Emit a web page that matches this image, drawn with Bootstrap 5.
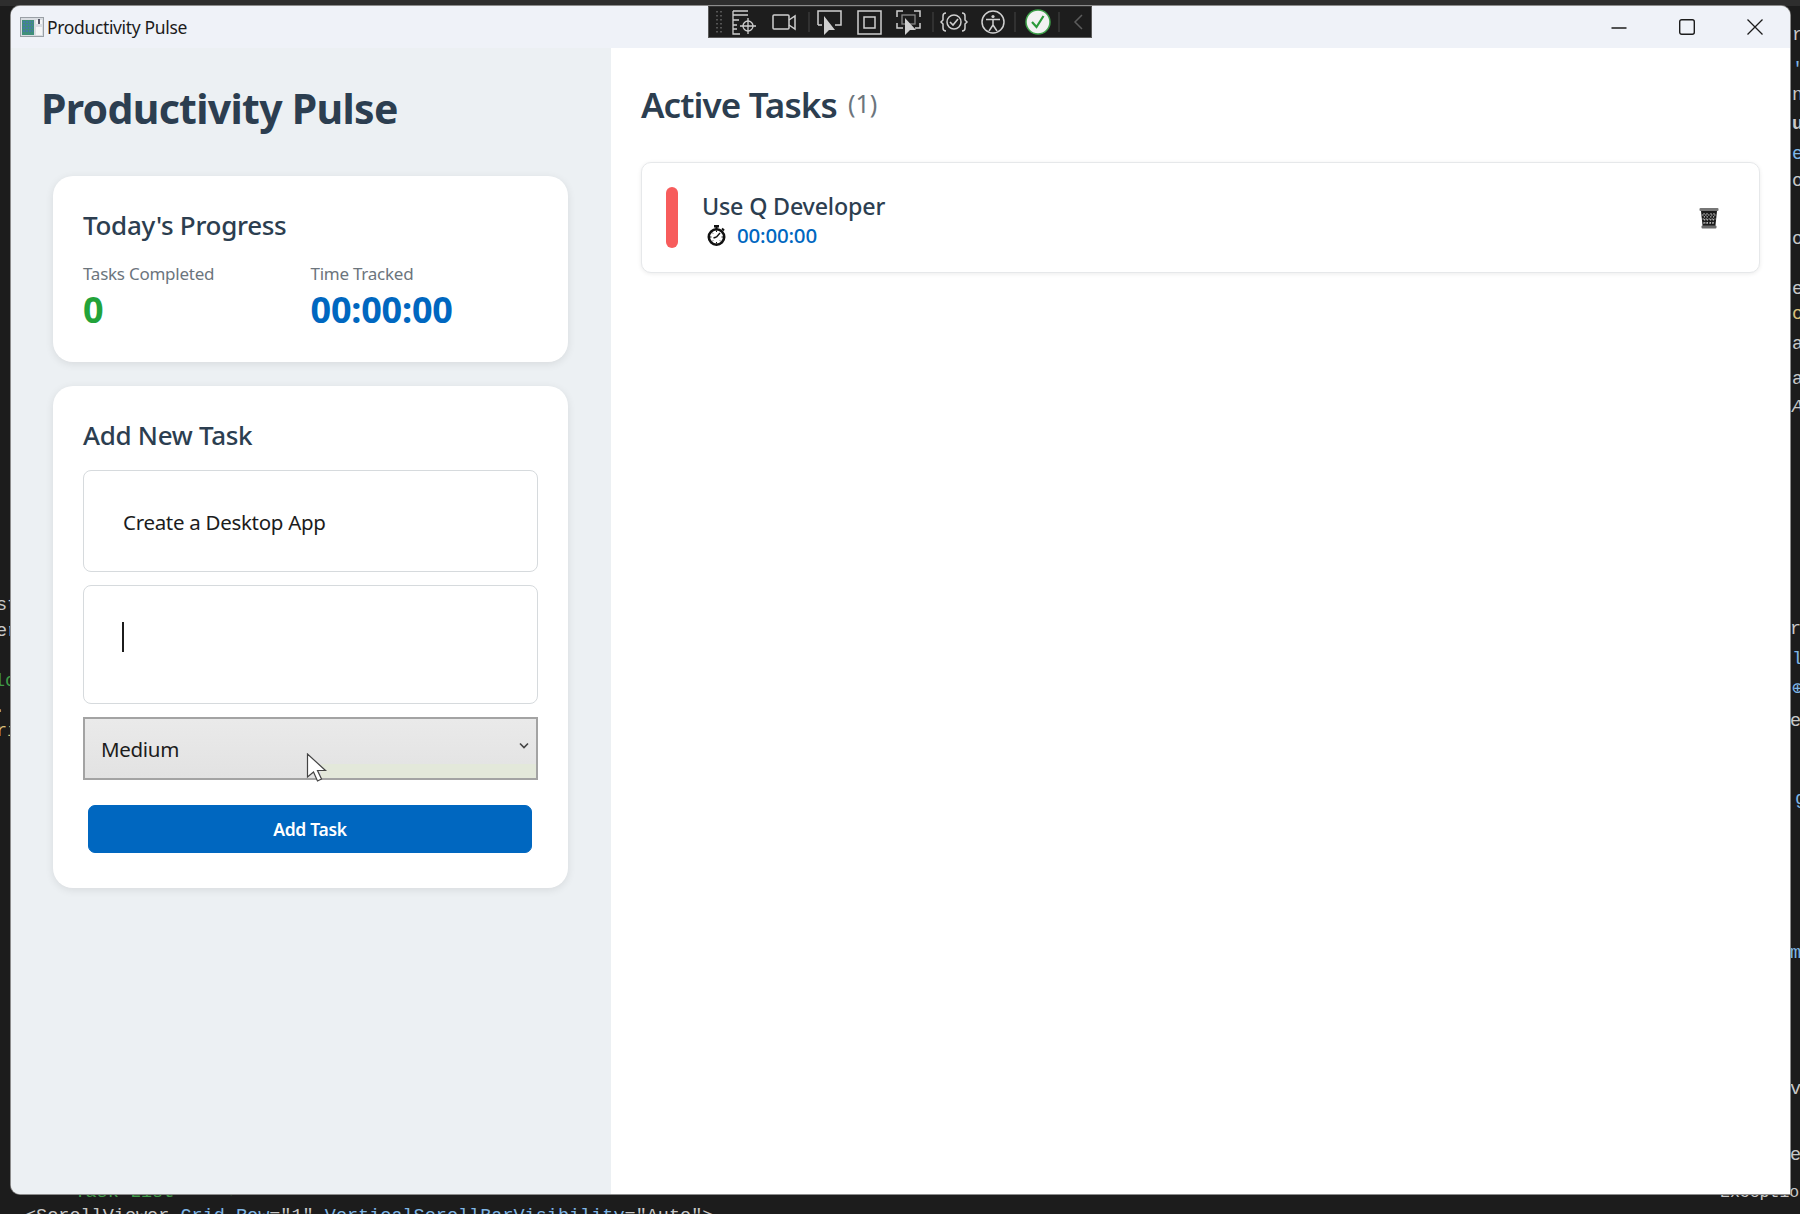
<!DOCTYPE html>
<html lang="en">
<head>
<meta charset="utf-8">
<title>Productivity Pulse</title>
<link href="https://cdn.jsdelivr.net/npm/bootstrap@5.3.0/dist/css/bootstrap.min.css" rel="stylesheet">
<script src="https://cdn.jsdelivr.net/npm/bootstrap@5.3.0/dist/js/bootstrap.bundle.min.js"></script>
<style>
html,body{height:100%;}
body{background:#1c1c1c;overflow:hidden;font-family:"Noto Sans","Open Sans",sans-serif;color:#2c3e50;position:relative;}
.top-strip{height:6px;background:#2e2e2e;}
.app-window{margin-left:11px;width:1779px;height:1188px;background:#fff;border-radius:9px 9px 0 9px;overflow:hidden;box-shadow:0 0 0 1px #8c8c8c;position:relative;}
.title-strip{height:42px;background:#eff2f8;color:#1c1c1c;font-size:17.5px;letter-spacing:-.35px;padding:0 0 0 9px;gap:3px;}
.caption-btn{width:68px;height:40px;}
.panes{height:1146px;}
.side-pane{width:600px;background:#ecf0f3;padding:30px 43px 0 30px;}
.app-heading{font-size:41px;line-height:60px;font-weight:700;letter-spacing:-.7px;margin:0 0 38px;color:#2c3e50;}
.side-box{margin-left:12px;width:515px;border:0;border-radius:20px;box-shadow:0 2px 8px rgba(0,0,0,.09);padding:0 30px;}
.stats-box{height:186px;padding-top:32px;margin-bottom:24px;}
.form-box{height:502px;padding-top:32px;}
.box-title{font-size:26px;line-height:34px;font-weight:500;letter-spacing:-.3px;color:#2c3e50;margin:0;}
.stat-label{font-size:17px;line-height:24px;color:#6c757d;letter-spacing:-.25px;margin-top:20px;}
.stat-value{font-size:36px;line-height:46px;font-weight:700;letter-spacing:-.2px;margin-top:1px;}
.tone-green{color:#22a33a;}
.tone-blue{color:#0067c0;}
.field-one,.field-two{border:1px solid #d6dadd;border-radius:8px;padding:0 39px;font-size:20.5px;letter-spacing:-.3px;color:#1c1c1c;box-shadow:none;}
.field-one{height:102px;margin-top:18px;padding-top:2px;}
.field-two{height:119px;margin-top:13px;resize:none;}
.caret-wrap{position:relative;}
.text-caret{position:absolute;left:39px;top:50px;width:2px;height:30px;background:#1c1c1c;}
.prio-wrap{position:relative;margin-top:13px;}
.prio-select{height:63px;border:2px solid #a3a3a3;border-radius:0;background-color:#e6e6e6;background-image:linear-gradient(#eaeaea,#e2e2e2);color:#1c1c1c;font-size:20.5px;letter-spacing:-.3px;padding:2px 0 0 16px;box-shadow:none;background-position:0 0;background-size:100% 100%;}
.prio-tint{position:absolute;left:238px;right:2px;bottom:2px;height:14px;background:#e3e8da;pointer-events:none;}
.prio-arrow{position:absolute;right:8px;top:25px;}
.mouse-pointer{position:absolute;left:223px;top:36px;pointer-events:none;}
.add-btn{display:block;margin:25px 5px 0;width:444px;height:48px;background:#0067c0;border-color:#0067c0;border-radius:7px;font-size:17.5px;font-weight:600;letter-spacing:-.3px;}
.main-pane{background:#fff;padding:30px 30px 0;}
.tasks-heading{font-size:35px;line-height:50px;font-weight:600;letter-spacing:-.9px;margin:0 0 32px;color:#2c3e50;}
.tasks-count{font-size:25px;font-weight:400;color:#6c757d;letter-spacing:0;margin-left:3px;vertical-align:5px;}
.task-box{height:111px;border:1px solid #e6e8ea;border-radius:10px;box-shadow:0 1px 4px rgba(0,0,0,.08);padding:0 40px 0 24px;}
.prio-bar{width:12px;height:61px;border-radius:6px;background:#f75c5c;margin-right:24px;}
.task-copy{padding-top:5px;}
.task-title{font-size:23.3px;line-height:30px;font-weight:500;letter-spacing:-.2px;color:#2c3e50;}
.task-time{font-size:20.5px;line-height:29px;font-weight:500;letter-spacing:-.2px;color:#0067c0;gap:11px;padding-left:5px;}
.toolbar-float{position:absolute;left:708px;top:6px;width:384px;height:32px;background:#1d1d1d;border:1px solid #5a5a5a;border-top-color:#333;}
.code-bit{position:absolute;font-family:"Liberation Mono",monospace;font-size:18.5px;line-height:20px;white-space:pre;color:#c8c8c8;}
.code-small{font-size:16.5px;}
.code-green{color:#3f9a47;}
.code-blue{color:#7fb6e6;}
.code-gold{color:#d9c07a;}
</style>
</head>
<body>
<div class="code-bit" style="left:-4px;top:596px">st</div>
<div class="code-bit" style="left:-4px;top:622px">er</div>
<div class="code-bit code-green" style="left:-6px;top:672px">lo</div>
<div class="code-bit" style="left:-6px;top:698px">.</div>
<div class="code-bit code-gold" style="left:-4px;top:722px">ri</div>
<div class="code-bit code-green" style="left:30px;top:1183px">-   Task List   --&gt;</div>
<div class="code-bit" style="left:25px;top:1207px">&lt;ScrollViewer <span class="code-blue">Grid.Row</span>="1" <span class="code-blue">VerticalScrollBarVisibility</span>="Auto"&gt;</div>
<div class="code-bit" style="left:1792px;top:26px">r</div>
<div class="code-bit code-blue" style="left:1792px;top:60px">'F</div>
<div class="code-bit" style="left:1792px;top:86px">na</div>
<div class="code-bit" style="left:1792px;top:115px;font-weight:700">u</div>
<div class="code-bit code-blue" style="left:1792px;top:145px">ep</div>
<div class="code-bit" style="left:1792px;top:172px">or</div>
<div class="code-bit" style="left:1792px;top:230px">o</div>
<div class="code-bit" style="left:1792px;top:280px">e</div>
<div class="code-bit code-gold" style="left:1792px;top:305px">op</div>
<div class="code-bit" style="left:1792px;top:335px">a</div>
<div class="code-bit" style="left:1792px;top:370px">a</div>
<div class="code-bit" style="left:1792px;top:398px;font-style:italic">A</div>
<div class="code-bit" style="left:1790px;top:620px">re</div>
<div class="code-bit code-blue" style="left:1792px;top:650px">ls</div>
<div class="code-bit code-blue" style="left:1792px;top:680px">⊕</div>
<div class="code-bit" style="left:1790px;top:712px">es</div>
<div class="code-bit code-blue" style="left:1795px;top:790px">g</div>
<div class="code-bit code-blue" style="left:1790px;top:944px">m</div>
<div class="code-bit" style="left:1790px;top:1080px">ve</div>
<div class="code-bit" style="left:1790px;top:1146px">er</div>
<div class="code-bit code-small" style="left:1720px;top:1183px">Exception:</div>

<div class="top-strip"></div>
<div class="app-window">
  <div class="title-strip d-flex align-items-center">
    <svg width="24" height="20" viewBox="0 0 24 20" aria-hidden="true">
      <rect x=".5" y=".5" width="23" height="19" fill="#d9dde2" stroke="#9aa0a6"/>
      <rect x="2" y="3" width="12" height="15" fill="#3f8f7a"/>
      <path d="M3 5h10M3 8h10M3 11h10M3 14h10" stroke="#4a73b5" stroke-width="1.4" stroke-dasharray="2 1"/>
      <rect x="16" y="3" width="6" height="4" fill="#f4f5f6"/>
      <rect x="16" y="10" width="6" height="8" fill="#f4f5f6"/>
      <rect x="18" y="2" width="2" height="5" fill="#556"/>
    </svg>
    <span>Productivity Pulse</span>
    <div class="ms-auto d-flex">
      <div class="caption-btn d-flex align-items-center justify-content-center">
        <svg width="16" height="16" viewBox="0 0 16 16" aria-hidden="true"><path d="M.5 9h15" stroke="#1c1c1c" stroke-width="1.4"/></svg>
      </div>
      <div class="caption-btn d-flex align-items-center justify-content-center">
        <svg width="16" height="16" viewBox="0 0 16 16" aria-hidden="true"><rect x=".7" y=".7" width="14.600" height="14.600" rx="2" fill="none" stroke="#1c1c1c" stroke-width="1.4"/></svg>
      </div>
      <div class="caption-btn d-flex align-items-center justify-content-center">
        <svg width="16" height="16" viewBox="0 0 16 16" aria-hidden="true"><path d="M.5.5l15 15M15.500.5l-15 15" stroke="#1c1c1c" stroke-width="1.3"/></svg>
      </div>
      <div style="width:1px" class="flex-shrink-0"></div>
    </div>
  </div>
  <div class="panes d-flex">
    <div class="side-pane flex-shrink-0">
      <h1 class="app-heading">Productivity Pulse</h1>
      <div class="card side-box stats-box">
        <h2 class="box-title">Today's Progress</h2>
        <div class="row g-0">
          <div class="col-6">
            <div class="stat-label">Tasks Completed</div>
            <div class="stat-value tone-green">0</div>
          </div>
          <div class="col-6">
            <div class="stat-label">Time Tracked</div>
            <div class="stat-value tone-blue">00:00:00</div>
          </div>
        </div>
      </div>
      <div class="card side-box form-box">
        <h2 class="box-title">Add New Task</h2>
        <input class="form-control field-one" type="text" value="Create a Desktop App" aria-label="Task title">
        <div class="caret-wrap">
          <textarea class="form-control field-two" aria-label="Task notes"></textarea>
          <span class="text-caret"></span>
        </div>
        <div class="prio-wrap">
          <select class="form-select prio-select" aria-label="Priority"><option>Medium</option><option>High</option><option>Low</option></select>
          <span class="prio-tint"></span>
          <svg class="prio-arrow" width="12" height="8" viewBox="0 0 12 8" aria-hidden="true"><path d="M2 1.500l4 4 4-4" fill="none" stroke="#444" stroke-width="1.6"/></svg>
          <svg class="mouse-pointer" width="22" height="30" viewBox="0 0 22 30" aria-hidden="true"><path d="M1.500 1v23l6-5 4 9 4-2-4-8.500h8z" fill="#fff" stroke="#444" stroke-width="1.200"/></svg>
        </div>
        <button type="button" class="btn btn-primary add-btn">Add Task</button>
      </div>
    </div>
    <div class="main-pane flex-grow-1">
      <h2 class="tasks-heading">Active Tasks <span class="tasks-count">(1)</span></h2>
      <div class="card task-box flex-row align-items-center">
        <div class="prio-bar"></div>
        <div class="flex-grow-1 task-copy">
          <div class="task-title">Use Q Developer</div>
          <div class="task-time d-flex align-items-center">
            <svg width="19" height="21" viewBox="0 0 19 21" aria-hidden="true">
              <rect x="7" y="0" width="5" height="2.500" fill="#111"/>
              <rect x="8.500" y="2" width="2" height="2.500" fill="#111"/>
              <path d="M15 3.500l2 2" stroke="#111" stroke-width="2"/>
              <circle cx="9.500" cy="12" r="7.700" fill="#fff" stroke="#111" stroke-width="2.600"/>
              <path d="M9.500 12l3.500-4M9.500 12l-3 1" stroke="#111" stroke-width="1.400"/>
              <path d="M9.500 5.500v1.500M9.500 17v1.500M3 12h1.500M14.500 12h1.500M5 7.500l1 1M13 15.500l1 1M5 16.500l1-1" stroke="#111" stroke-width="1"/>
            </svg>
            <span>00:00:00</span>
          </div>
        </div>
        <svg width="20" height="22" viewBox="0 0 20 22" aria-hidden="true">
          <rect x="0.500" y="1" width="19" height="3" rx="1" fill="#777"/>
          <path d="M2 4h16l-1.600 15H3.600z" fill="#1b1b1b"/>
          <path d="M5 6l1 11M8 6l.5 11M12 6l-.5 11M15 6l-1 11M3 8l14 0M3.500 12h13M4 16h12" stroke="#d0d0d0" stroke-width=".9" stroke-dasharray="1.600 1.400" fill="none"/>
          <rect x="2.500" y="18.500" width="15" height="3" rx="1" fill="#6a6a6a"/>
        </svg>
      </div>
    </div>
  </div>
</div>

<div class="toolbar-float d-flex align-items-center">
  <svg width="382" height="30" viewBox="0 0 382 30" aria-hidden="true" fill="none" stroke="#cfcfcf" stroke-width="1.300">
    <path d="M8 4v23M12 4v23" stroke="#555" stroke-width="2" stroke-dasharray="1.500 2.500"/>
    <path d="M24 4h15M24 8h15M24 4v23h7M24 13h6M24 18h4M24 22h4"/>
    <circle cx="39" cy="19" r="5"/>
    <path d="M39 11v16M31 19h16"/>
    <rect x="64" y="8" width="16" height="14" rx="1" stroke-width="1.500"/>
    <path d="M80 13l6-4v13l-6-4" stroke-width="1.500"/>
    <path d="M100 5v20" stroke="#3d3d3d"/>
    <path d="M109 18V4h23v14h-6M109 18h4" stroke-width="1.500"/>
    <path d="M115 9v19l5-5h6z" fill="#cfcfcf" stroke="none"/>
    <rect x="149" y="4" width="23" height="23" stroke-width="1.500"/>
    <rect x="155" y="10" width="11" height="11" stroke-width="1.500"/>
    <path d="M188 10V4h6M205 4h6v6M188 16v5h6M206 21h5v-5" stroke-width="1.500"/>
    <rect x="193" y="8" width="13" height="9" stroke="#888"/>
    <path d="M196 11v17l5-5h6z" fill="#cfcfcf" stroke="none"/>
    <path d="M224 5v20" stroke="#3d3d3d"/>
    <path d="M237 6q-3 0-3 3v4l-2 2 2 2v4q0 3 3 3M253 6q3 0 3 3v4l2 2-2 2v4q0 3-3 3" stroke-width="1.500"/>
    <circle cx="245" cy="15" r="7" stroke-width="1.500"/>
    <path d="M241 15l3 3 5-6" stroke-width="1.600"/>
    <circle cx="284" cy="15" r="11" stroke-width="1.500"/>
    <circle cx="284" cy="9.500" r="1.600" fill="#cfcfcf" stroke="none"/>
    <path d="M277 12.500h14M284 13v6M284 18l-4 6M284 18l4 6" stroke-width="1.500"/>
    <path d="M306 5v20" stroke="#3d3d3d"/>
    <circle cx="329" cy="15" r="12" fill="#f2f2f2" stroke="#3ea24a" stroke-width="1.500"/>
    <path d="M323 15l4.500 5 7-11" stroke="#2b9a3a" stroke-width="2.200"/>
    <path d="M350 5v20" stroke="#3d3d3d"/>
    <path d="M373 8l-7 7 7 7" stroke="#5c5c5c" stroke-width="1.500"/>
  </svg>
</div>
</body>
</html>
